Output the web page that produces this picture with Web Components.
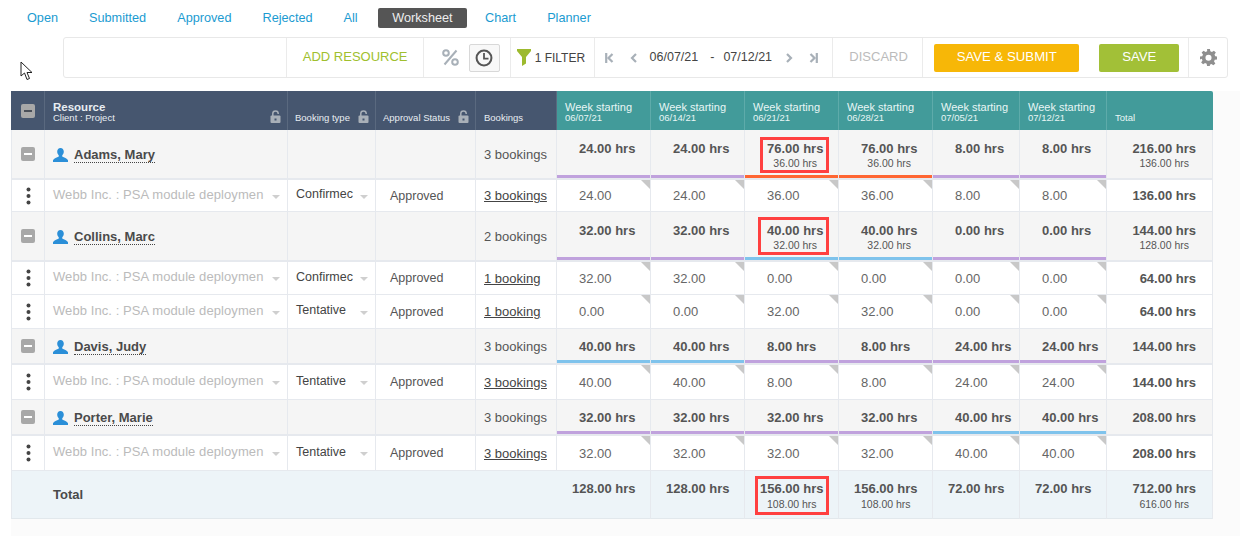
<!DOCTYPE html>
<html>
<head>
<meta charset="utf-8">
<title>Worksheet</title>
<style>
  html, body { margin: 0; height: 100%; background: #fff; }
  body { font: 13px "Liberation Sans", Arial, sans-serif; color: #555; overflow: hidden; }
</style>
</head>
<body>
<work-sheet></work-sheet>

<script>
const ICONS = {
  lock: `<svg width="11" height="13" viewBox="0 0 11 13"><path d="M2.800 6V3.600a2.700 2.700 0 0 1 5.400 0V4" fill="none" stroke="currentColor" stroke-width="1.500"/><rect x="0.500" y="5.500" width="10" height="7.500" rx="1" fill="currentColor"/><rect x="4.500" y="8.500" width="2" height="2" fill="#46566f"/></svg>`,
  person: `<svg width="15" height="14" viewBox="0 0 15 14"><path d="M7.500 0C5.500 0 4.200 1.500 4.200 3.600c0 1.600.7 3 1.600 3.800v1.100C4 9.500.8 10 0 12.300V14h15v-1.700c-.8-2.300-4-2.800-5.800-3.800V7.400c.9-.8 1.600-2.200 1.600-3.800C10.800 1.500 9.500 0 7.500 0z" fill="currentColor"/></svg>`,
  percent: `<svg width="17" height="17" viewBox="0 0 17 17" fill="none" stroke="currentColor" stroke-width="2"><circle cx="4" cy="4" r="2.800"/><circle cx="13" cy="13" r="2.800"/><path d="M14.500 1.500 2.500 15.500"/></svg>`,
  clock: `<svg width="18" height="18" viewBox="0 0 16 16" fill="none" stroke="#555" stroke-width="1.800"><circle cx="8" cy="8" r="6.600"/><path d="M8 3.500V8.500H12" stroke-width="1.600"/></svg>`,
  funnel: `<svg width="14" height="17" viewBox="0 0 14 17"><path d="M0 0H14V2L9 8V14.500L5 17V8L0 2Z" fill="#9dba2e"/></svg>`,
  first: `<svg width="9" height="10" viewBox="0 0 9 10" fill="none" stroke="currentColor" stroke-width="2.200"><path d="M1.200 0V10"/><path d="M7.500 1 3.500 5l4 4"/></svg>`,
  prev: `<svg width="7" height="10" viewBox="0 0 7 10" fill="none" stroke="currentColor" stroke-width="2.200"><path d="M6 1 2 5l4 4"/></svg>`,
  next: `<svg width="7" height="10" viewBox="0 0 7 10" fill="none" stroke="currentColor" stroke-width="2.200"><path d="M1 1l4 4-4 4"/></svg>`,
  last: `<svg width="9" height="10" viewBox="0 0 9 10" fill="none" stroke="currentColor" stroke-width="2.200"><path d="M7.800 0V10"/><path d="M1.500 1l4 4-4 4"/></svg>`,
  gear: `<svg width="17" height="17" viewBox="0 0 24 24"><path fill-rule="evenodd" d="M10 0h4l.6 3.200 2.300 1 2.700-1.900 2.800 2.800-1.900 2.700 1 2.300L24 10.700v4l-3.200.6-1 2.300 1.900 2.700-2.800 2.800-2.700-1.900-2.300 1L14 24h-4l-.6-3.200-2.300-1-2.700 1.900-2.800-2.800 1.900-2.700-1-2.300L0 14.700v-4l3.200-.6 1-2.300-1.900-2.700 2.800-2.800 2.700 1.900 2.300-1zM12 8a4.300 4.300 0 1 0 0 8.600A4.300 4.300 0 0 0 12 8z" fill="currentColor"/></svg>`,
  cursor: `<svg width="14" height="20" viewBox="0 0 14 20"><path d="M1 1V15L4.500 12 7 18.500 9.500 17.500 7 11.500H12Z" fill="#fff" stroke="#222" stroke-width="1"/></svg>`,
};

class TabItem extends HTMLElement {
  constructor() {
    super();
    this.attachShadow({ mode: "open" });
    this.shadowRoot.innerHTML = `
    <style>
      :host {
        display: block;
        height: 20px;
        line-height: 20px;
        padding: 0 var(--pad, 0);
        color: #1b9bd1;
        font-size: 12.700px;
        border-radius: 2px;
      }
      :host([active]) { background: #555; color: #eee; }
    </style>
    <slot></slot>`;
  }
}

class TabBar extends HTMLElement {
  constructor() {
    super();
    this.attachShadow({ mode: "open" });
    this.shadowRoot.innerHTML = `
    <style>
      :host { display: flex; height: 37px; padding: 8px 0 0 27px; box-sizing: border-box; }
    </style>
    <slot></slot>`;
  }
}

class ToolSection extends HTMLElement {
  constructor() {
    super();
    this.attachShadow({ mode: "open" });
    this.shadowRoot.innerHTML = `
    <style>
      :host {
        display: flex;
        align-items: center;
        box-sizing: border-box;
        height: 100%;
        border-right: 1px solid #ebebeb;
      }
      :host(:last-child) { border-right: 0; }
    </style>
    <slot></slot>`;
  }
}

class ActionButton extends HTMLElement {
  constructor() {
    super();
    this.attachShadow({ mode: "open" });
    this.shadowRoot.innerHTML = `
    <style>
      :host {
        display: block;
        height: 28px;
        line-height: 26px;
        text-align: center;
        color: #fff;
        font-size: 13.200px;
        border-radius: 2px;
        background: var(--bg, #999);
      }
    </style>
    <slot></slot>`;
  }
}

class ToolBar extends HTMLElement {
  constructor() {
    super();
    this.attachShadow({ mode: "open" });
    this.shadowRoot.innerHTML = `
    <style>
      :host {
        display: flex;
        box-sizing: border-box;
        height: 41px;
        width: 1165px;
        margin-left: 63px;
        border: 1px solid #e8e8e8;
        border-radius: 3px;
      }
      .icon { display: flex; color: #a8b0b8; }
      .add { color: #a0bf2e; font-size: 13px; margin-bottom: 2px; }
      .clock {
        display: flex;
        align-items: center;
        justify-content: center;
        width: 31px;
        height: 28px;
        box-sizing: border-box;
        border: 1px solid #d8d8d8;
        border-radius: 2px;
        background: #f8f8f8;
      }
      .filter { font-size: 12px; color: #444; margin-left: 4px; }
      .date { color: #444; font-size: 12.500px; margin-bottom: 2px; }
      .discard { color: #bbb; font-size: 13px; margin-bottom: 2px; }
    </style>
    <tool-section style="width:223px"></tool-section>
    <tool-section style="width:137px;padding-left:16px"><span class="add">ADD RESOURCE</span></tool-section>
    <tool-section style="width:87px;padding-left:18px">
      <span class="icon">${ICONS.percent}</span>
      <span class="clock" style="margin-left:10px">${ICONS.clock}</span>
    </tool-section>
    <tool-section style="width:84px;padding-left:6px">
      <span class="icon">${ICONS.funnel}</span><span class="filter">1 FILTER</span>
    </tool-section>
    <tool-section style="width:239px;padding-left:10px">
      <span class="icon">${ICONS.first}</span>
      <span class="icon" style="margin-left:16px">${ICONS.prev}</span>
      <span class="date" style="margin-left:13px">06/07/21</span>
      <span class="date" style="margin-left:12px">-</span>
      <span class="date" style="margin-left:9px">07/12/21</span>
      <span class="icon" style="margin-left:14px">${ICONS.next}</span>
      <span class="icon" style="margin-left:16px">${ICONS.last}</span>
    </tool-section>
    <tool-section style="width:90px;padding-left:16px"><span class="discard">DISCARD</span></tool-section>
    <tool-section style="width:266px;padding-left:11px">
      <action-button style="--bg:#f7b707;width:145px">SAVE &amp; SUBMIT</action-button>
      <action-button style="--bg:#a2c037;width:80px;margin-left:20px">SAVE</action-button>
    </tool-section>
    <tool-section style="width:38px;padding-left:11px"><span class="icon" style="color:#8f8f8f">${ICONS.gear}</span></tool-section>`;
  }
}

class MinusBox extends HTMLElement {
  constructor() {
    super();
    this.attachShadow({ mode: "open" });
    this.shadowRoot.innerHTML = `
    <style>
      :host {
        display: flex;
        align-items: center;
        justify-content: center;
        width: 14px;
        height: 14px;
        border-radius: 2px;
        background: #a8a8a8;
      }
      i { width: 8px; height: 2px; background: var(--line, #fff); }
    </style>
    <i></i>`;
  }
}

const BAR = { p: "#c0a2dd", o: "#ff6633", b: "#7fc3ec" };

class SheetRow extends HTMLElement {
  constructor() {
    super();
    this.attachShadow({ mode: "open" });
  }

  static get styles() {
    return `
      :host {
        display: grid;
        grid-template-columns: 34px 243px 88px 100px 81px 94px 94px 94px 94px 87px 87px 106px;
        box-sizing: border-box;
        height: var(--h, 33px);
        width: 1202px;
      }
      .c {
        position: relative;
        box-sizing: border-box;
        border-right: 1px solid #e6e9ee;
        border-bottom: 1px solid #e6e9ee;
        display: flex;
        align-items: center;
        white-space: nowrap;
        min-width: 0;
      }
      style + .c { border-left: 1px solid #e6e9ee; justify-content: center; }

      :host(.head) .c {
        border: 0;
        border-right: 1px solid #5a697f;
        background: #46566f;
        color: #e8edf2;
        font-size: 9.500px;
        display: block;
        padding: 11px 0 0 8px;
        line-height: 11px;
      }
      :host(.head) style + .c { display: flex; padding: 0; }
      :host(.head) .wk { background: #429b9a; border-right-color: #5eabaa; color: #e8f6f5; padding-left: 8px; }
      :host(.head) .wk:last-child { border-right: 0; border-top-right-radius: 2px; }
      :host(.head) .wk b { font-weight: 400; font-size: 11px; line-height: 10px; display: block; }
      :host(.head) .low { padding: 21px 0 0 7px; }
      :host(.head) .res b { font-size: 11.500px; line-height: 10px; display: block; }
      .lock { position: absolute; right: 6px; bottom: 7px; color: #a9b0b8; display: flex; }

      :host(.parent) .c { background: #f5f5f5; border-bottom: 2px solid #e6e9ee; }
      :host(.total) .c { background: #edf4f8; border-bottom: 1px solid #e2e8ec; }
      :host(.total) .c.open { border-right: 0; }
      :host(.sub) .c { background: #fff; }

      .who { padding: 2px 0 0 8px; color: #4a4a4a; font-weight: 700; font-size: 13px; }
      :host(.total) .who { padding-top: 0; }
      .who svg { color: #2b8fd8; margin-right: 6px; flex: none; }
      .who span { border-bottom: 1px dotted #444; line-height: 14px; }
      .bk { padding-left: 8px; font-size: 13px; }
      .bk u { color: #444; }
      .sel { padding-left: 8px; font-size: 12.500px; padding-bottom: 3px; color: #444; }
      .sel::after {
        content: "";
        position: absolute;
        right: 7px;
        top: 50%;
        margin-top: -1px;
        border: 4px solid transparent;
        border-top-color: #cfcfcf;
        border-bottom: 0;
      }
      .proj { color: #bbb; font-size: 13px; letter-spacing: .08px; }
      .appr { padding-left: 14px; font-size: 12.500px; }

      .num { align-items: flex-start; padding: var(--pt, 10px) 0 0 22px; }
      .num.tot { padding: var(--pt, 10px) 16px 0 0; justify-content: flex-end; }
      :host(.total) .num { padding-left: 15px; }
      :host(.total) .num.tot { padding-left: 0; }
      :host(.sub) .num { align-items: center; font-size: 13px; padding-top: 0; color: #666; }
      .stack { display: inline-block; text-align: center; }
      .stack b { display: block; font-size: 13px; line-height: 16px; color: #555; }
      .stack small { display: block; font-size: 10.500px; line-height: var(--sl, 14px); color: #555; }
      .bar { position: absolute; left: 0; right: 0; bottom: 0; height: 3px; }
      .corner {
        position: absolute;
        right: 0;
        top: 0;
        border-style: solid;
        border-width: 0 9px 9px 0;
        border-color: transparent #c8c8c8 transparent transparent;
      }
      .box { position: absolute; box-sizing: border-box; border: 3px solid #ff4040; }
    `;
  }

  set data(d) {
    this.classList.add(d.type);
    if (d.h) this.style.setProperty("--h", `${d.h}px`);
    if (d.type === "parent" && d.h === 50) {
      this.style.setProperty("--pt", "11px");
      this.style.setProperty("--sl", "13px");
    }
    this.shadowRoot.innerHTML = `<style>${SheetRow.styles}</style>${this[d.type](d)}`;
  }

  week(w) {
    const [main, small, bar, box] = w;
    const boxEl = box ? `<i class="box" style="left:${box[0]}px;top:${box[1]}px;width:${box[2]}px;height:${box[3]}px"></i>` : "";
    return `<div class="c num"><span class="stack"><b>${main} hrs</b>${small ? `<small>${small} hrs</small>` : ""}</span>${bar ? `<i class="bar" style="background:${BAR[bar]}"></i>` : ""}${boxEl}</div>`;
  }

  head() {
    const lock = `<span class="lock">${ICONS.lock}</span>`;
    const dates = ["06/07/21", "06/14/21", "06/21/21", "06/28/21", "07/05/21", "07/12/21"];
    return `
      <div class="c"><minus-box style="--line:#4a4f58"></minus-box></div>
      <div class="c res"><b>Resource</b>Client : Project${lock}</div>
      <div class="c low">Booking type${lock}</div>
      <div class="c low">Approval Status${lock}</div>
      <div class="c low" style="padding-left:8px">Bookings</div>
      ${dates.map(x => `<div class="c wk"><b>Week starting</b>${x}</div>`).join("")}
      <div class="c wk low" style="padding-left:8px">Total</div>`;
  }

  parent(d) {
    return `
      <div class="c"><minus-box></minus-box></div>
      <div class="c who">${ICONS.person}<span>${d.name}</span></div>
      <div class="c"></div>
      <div class="c"></div>
      <div class="c bk">${d.bookings}</div>
      ${d.weeks.map(w => this.week(w)).join("")}
      ${this.week(d.total).replace('class="c num"', 'class="c num tot"')}`;
  }

  sub(d) {
    return `
      <div class="c"><svg width="5" height="18" viewBox="0 0 5 18" fill="#444"><circle cx="2.500" cy="2.500" r="2"/><circle cx="2.500" cy="9" r="2"/><circle cx="2.500" cy="15.500" r="2"/></svg></div>
      <div class="c sel proj">Webb Inc. : PSA module deploymen</div>
      <div class="c sel type">${d.kind}</div>
      <div class="c appr">Approved</div>
      <div class="c bk"><u>${d.bookings}</u></div>
      ${d.weeks.map(w => `<div class="c num">${w}<i class="corner"></i></div>`).join("")}
      <div class="c num tot"><b style="color:#555">${d.total} hrs</b></div>`;
  }

  total(d) {
    return `
      <div class="c open"></div>
      <div class="c open who" style="grid-column:span 4">Total</div>
      ${d.weeks.map(w => this.week(w)).join("")}
      ${this.week(d.total).replace('class="c num"', 'class="c num tot"')}`;
  }
}

const ROWS = [
  { type: "head", h: 39 },
  { type: "parent", h: 50, name: "Adams, Mary", bookings: "3 bookings",
    weeks: [["24.00", "", "p"], ["24.00", "", "p"], ["76.00", "36.00", "o", [15, 7, 69, 36]], ["76.00", "36.00", "o"], ["8.00", "", "p"], ["8.00", "", "p"]],
    total: ["216.00", "136.00"] },
  { type: "sub", h: 32, kind: "Confirmec", bookings: "3 bookings", weeks: ["24.00", "24.00", "36.00", "36.00", "8.00", "8.00"], total: "136.00" },
  { type: "parent", h: 50, name: "Collins, Marc", bookings: "2 bookings",
    weeks: [["32.00", "", "p"], ["32.00", "", "p"], ["40.00", "32.00", "b", [13, 5, 71, 38]], ["40.00", "32.00", "b"], ["0.00", "", "p"], ["0.00", "", "p"]],
    total: ["144.00", "128.00"] },
  { type: "sub", h: 33, kind: "Confirmec", bookings: "1 booking", weeks: ["32.00", "32.00", "0.00", "0.00", "0.00", "0.00"], total: "64.00" },
  { type: "sub", h: 34, kind: "Tentative", bookings: "1 booking", weeks: ["0.00", "0.00", "32.00", "32.00", "0.00", "0.00"], total: "64.00" },
  { type: "parent", h: 36, name: "Davis, Judy", bookings: "3 bookings",
    weeks: [["40.00", "", "b"], ["40.00", "", "b"], ["8.00", "", "p"], ["8.00", "", "p"], ["24.00", "", "p"], ["24.00", "", "p"]],
    total: ["144.00"] },
  { type: "sub", h: 35, kind: "Tentative", bookings: "3 bookings", weeks: ["40.00", "40.00", "8.00", "8.00", "24.00", "24.00"], total: "144.00" },
  { type: "parent", h: 36, name: "Porter, Marie", bookings: "3 bookings",
    weeks: [["32.00", "", "p"], ["32.00", "", "p"], ["32.00", "", "p"], ["32.00", "", "p"], ["40.00", "", "b"], ["40.00", "", "b"]],
    total: ["208.00"] },
  { type: "sub", h: 35, kind: "Tentative", bookings: "3 bookings", weeks: ["32.00", "32.00", "32.00", "32.00", "40.00", "40.00"], total: "208.00" },
  { type: "total", h: 48,
    weeks: [["128.00"], ["128.00"], ["156.00", "108.00", "", [10, 5, 74, 39]], ["156.00", "108.00"], ["72.00"], ["72.00"]],
    total: ["712.00", "616.00"] },
];

class SheetGrid extends HTMLElement {
  constructor() {
    super();
    this.attachShadow({ mode: "open" });
  }

  connectedCallback() {
    this.shadowRoot.innerHTML = `
    <style>
      :host { display: block; margin: 13px 0 0 11px; background: #fbfbfb; height: 445px; }
    </style>`;
    ROWS.forEach(r => {
      const row = document.createElement("sheet-row");
      row.data = r;
      this.shadowRoot.appendChild(row);
    });
  }
}

class WorkSheet extends HTMLElement {
  constructor() {
    super();
    this.attachShadow({ mode: "open" });
    this.shadowRoot.innerHTML = `
    <style>
      :host { display: block; position: relative; }
      .cursor { position: absolute; left: 20px; top: 61px; display: flex; }
      tab-item { margin-right: 31px; }
    </style>
    <tab-bar>
      <tab-item>Open</tab-item>
      <tab-item>Submitted</tab-item>
      <tab-item>Approved</tab-item>
      <tab-item>Rejected</tab-item>
      <tab-item style="margin-right:20px">All</tab-item>
      <tab-item active style="--pad:14.500px;margin-right:18px">Worksheet</tab-item>
      <tab-item>Chart</tab-item>
      <tab-item>Planner</tab-item>
    </tab-bar>
    <tool-bar></tool-bar>
    <sheet-grid></sheet-grid>
    <span class="cursor">${ICONS.cursor}</span>`;
  }
}

customElements.define("tab-item", TabItem);
customElements.define("tab-bar", TabBar);
customElements.define("tool-section", ToolSection);
customElements.define("action-button", ActionButton);
customElements.define("tool-bar", ToolBar);
customElements.define("minus-box", MinusBox);
customElements.define("sheet-row", SheetRow);
customElements.define("sheet-grid", SheetGrid);
customElements.define("work-sheet", WorkSheet);
</script>
</body>
</html>
